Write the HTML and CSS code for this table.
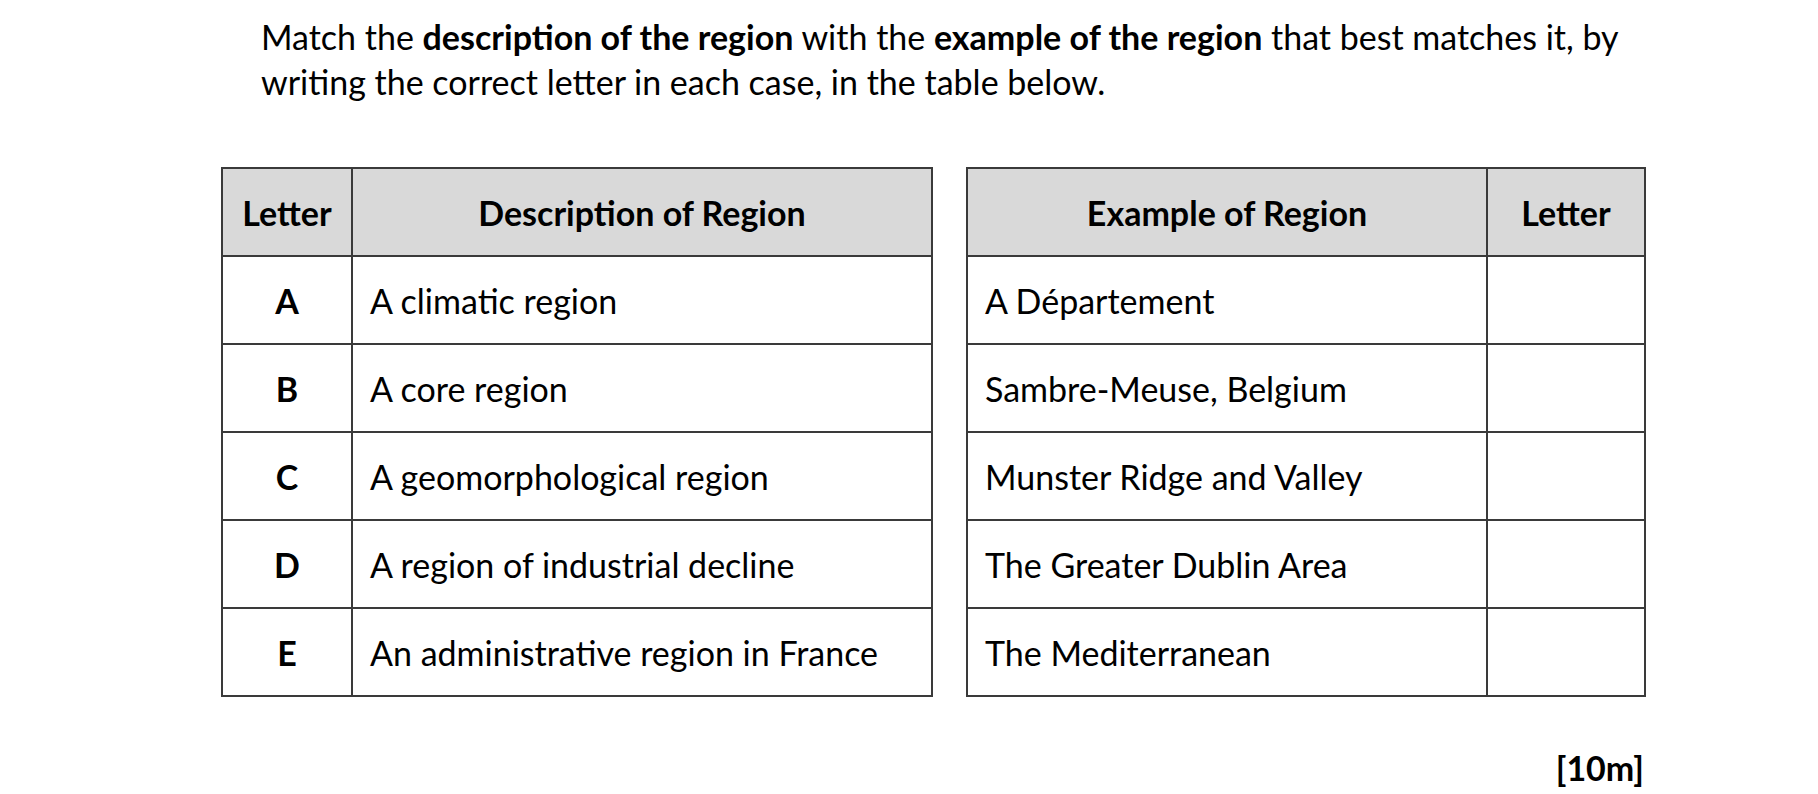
FILE: index.html
```html
<!DOCTYPE html>
<html lang="en">
<head>
<meta charset="utf-8">
<title>Match regions</title>
<link rel="stylesheet" href="styles.css">
</head>
<body>
<div class="page">
  <p class="intro">Match the <b>description of the region</b> with the <b>example of the region</b> that best matches it, by writing the correct letter in each case, in the table below.</p>
  <div class="tables">
    <table class="tbl left">
      <thead>
        <tr><th class="c-letter">Letter</th><th class="c-desc">Description of Region</th></tr>
      </thead>
      <tbody>
        <tr><td class="c-letter key">A</td><td>A climatic region</td></tr>
        <tr><td class="c-letter key">B</td><td>A core region</td></tr>
        <tr><td class="c-letter key">C</td><td>A geomorphological region</td></tr>
        <tr><td class="c-letter key">D</td><td>A region of industrial decline</td></tr>
        <tr><td class="c-letter key">E</td><td>An administrative region in France</td></tr>
      </tbody>
    </table>
    <table class="tbl right">
      <thead>
        <tr><th class="c-ex">Example of Region</th><th class="c-ans">Letter</th></tr>
      </thead>
      <tbody>
        <tr><td>A Département</td><td></td></tr>
        <tr><td>Sambre-Meuse, Belgium</td><td></td></tr>
        <tr><td>Munster Ridge and Valley</td><td></td></tr>
        <tr><td>The Greater Dublin Area</td><td></td></tr>
        <tr><td>The Mediterranean</td><td></td></tr>
      </tbody>
    </table>
  </div>
  <div class="marks">[10m]</div>
</div>
</body>
</html>
```

FILE: styles.css
```css
html, body {
  margin: 0;
  padding: 0;
  background: #ffffff;
}
body {
  font-family: Lato, "Open Sans", sans-serif;
  color: #000;
}
.page {
  width: 1818px;
  padding-top: 14px;
}
.intro {
  margin: 0 0 0 261px;
  width: 1390px;
  font-size: 34px;
  line-height: 45px;
}
.intro b {
  font-weight: 700;
}
.tables {
  display: flex;
  gap: 33px;
  margin: 63px 0 0 221px;
}
.tbl {
  border-collapse: collapse;
  font-size: 34px;
}
.tbl th, .tbl td {
  border: 2px solid #3a3a3a;
  height: 88px;
  box-sizing: border-box;
  padding: 0 0 0 17px;
  text-align: left;
}
.tbl th {
  background: #d9d9d9;
  font-weight: 700;
  text-align: center;
  padding: 0;
}
.left .c-letter { width: 130px; }
.left .c-desc { width: 580px; }
.right .c-ex { width: 520px; }
.right .c-ans { width: 158px; }
.tbl td.key {
  text-align: center;
  font-weight: 700;
  padding: 0;
}
.marks {
  width: 1644px;
  text-align: right;
  font-size: 34px;
  font-weight: 700;
  margin-top: 50px;
}
```
